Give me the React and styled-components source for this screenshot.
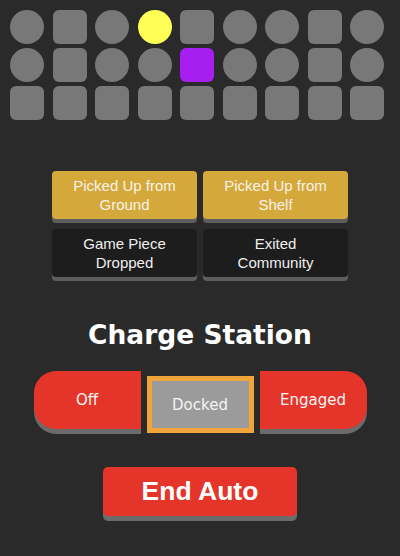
import React from 'react';
import styled, { createGlobalStyle } from 'styled-components';

const GlobalStyle = createGlobalStyle`
  body {
    margin: 0;
    background: #2a2a2a;
    font-family: 'Liberation Sans', Arial, sans-serif;
  }
`;

const Page = styled.div`
  width: 400px;
  height: 556px;
  background: #2a2a2a;
  display: flex;
  flex-direction: column;
  align-items: center;
  overflow: hidden;
`;

const NodeGrid = styled.div`
  align-self: flex-start;
  display: grid;
  grid-template-columns: repeat(9, 34px);
  grid-auto-rows: 34px;
  column-gap: 8.5px;
  row-gap: 4px;
  margin: 10px 0 0 10px;
`;

// cone = circle, cube = rounded square
const Node = styled.div`
  width: 34px;
  height: 34px;
  border-radius: ${(p) => (p.$shape === 'cone' ? '50%' : '6px')};
  background: ${(p) => p.$fill || '#787878'};
`;

const ActionGrid = styled.div`
  display: grid;
  grid-template-columns: repeat(2, 145px);
  column-gap: 6px;
  row-gap: 10px;
  margin-top: 51px;
`;

const ActionButton = styled.button`
  height: 48px;
  padding: 0 6px;
  border: none;
  border-radius: 4px;
  background: ${(p) => (p.$gold ? '#d4a83a' : '#1d1d1d')};
  color: ${(p) => (p.$gold ? '#f7f3e8' : '#eeeeee')};
  box-shadow: 0 4px 0 #5e5e5e;
  font-family: 'Liberation Sans', Arial, sans-serif;
  font-size: 15px;
  line-height: 19px;
  text-align: center;
`;

const Title = styled.h2`
  margin: 42px 0 0;
  font-family: 'DejaVu Sans', Verdana, sans-serif;
  font-weight: bold;
  font-size: 26.5px;
  line-height: 31px;
  color: #ffffff;
`;

const ChargeRow = styled.div`
  display: flex;
  align-items: flex-start;
  gap: 6px;
  margin-top: 21px;
`;

const ChargeButton = styled.button`
  width: 107px;
  height: 58px;
  padding: 0;
  border: none;
  background: #e5342a;
  color: #f4f4f4;
  box-shadow: 0 5px 0 #6b6b6b;
  font-family: 'DejaVu Sans', Verdana, sans-serif;
  font-size: 15px;
  border-radius: ${(p) => (p.$side === 'left' ? '22px 0 0 22px' : '0 22px 22px 0')};
`;

const ChargeSelected = styled.button`
  width: 107px;
  height: 57px;
  margin-top: 5px;
  padding: 0;
  border: 5px solid #f0a53a;
  background: #9b9b9b;
  color: #f4f4f4;
  font-family: 'DejaVu Sans', Verdana, sans-serif;
  font-size: 15px;
`;

const EndButton = styled.button`
  width: 194px;
  height: 49px;
  margin-top: 34px;
  border: none;
  border-radius: 5px;
  background: #e5342a;
  color: #ffffff;
  box-shadow: 0 5px 0 #6b6b6b;
  font-family: 'Liberation Sans', Arial, sans-serif;
  font-weight: bold;
  font-size: 26.5px;
`;

const rows = [
  ['cone', 'cube', 'cone', 'cone', 'cube', 'cone', 'cone', 'cube', 'cone'],
  ['cone', 'cube', 'cone', 'cone', 'cube', 'cone', 'cone', 'cube', 'cone'],
  ['cube', 'cube', 'cube', 'cube', 'cube', 'cube', 'cube', 'cube', 'cube'],
];

const filled = {
  '0-3': '#ffff55',
  '1-4': '#a61ff0',
};

const actions = [
  { label: ['Picked Up from', 'Ground'], gold: true },
  { label: ['Picked Up from', 'Shelf'], gold: true },
  { label: ['Game Piece', 'Dropped'] },
  { label: ['Exited', 'Community'] },
];

const App = () => {
  return (
    <Page>
      <GlobalStyle />
      <NodeGrid>
        {rows.map((row, r) =>
          row.map((shape, c) => (
            <Node key={`${r}-${c}`} $shape={shape} $fill={filled[`${r}-${c}`]} />
          ))
        )}
      </NodeGrid>

      <ActionGrid>
        {actions.map((a) => (
          <ActionButton key={a.label.join(' ')} $gold={a.gold}>
            {a.label[0]}
            <br />
            {a.label[1]}
          </ActionButton>
        ))}
      </ActionGrid>

      <Title>Charge Station</Title>
      <ChargeRow>
        <ChargeButton $side="left">Off</ChargeButton>
        <ChargeSelected>Docked</ChargeSelected>
        <ChargeButton $side="right">Engaged</ChargeButton>
      </ChargeRow>

      <EndButton>End Auto</EndButton>
    </Page>
  );
};

export default App;
